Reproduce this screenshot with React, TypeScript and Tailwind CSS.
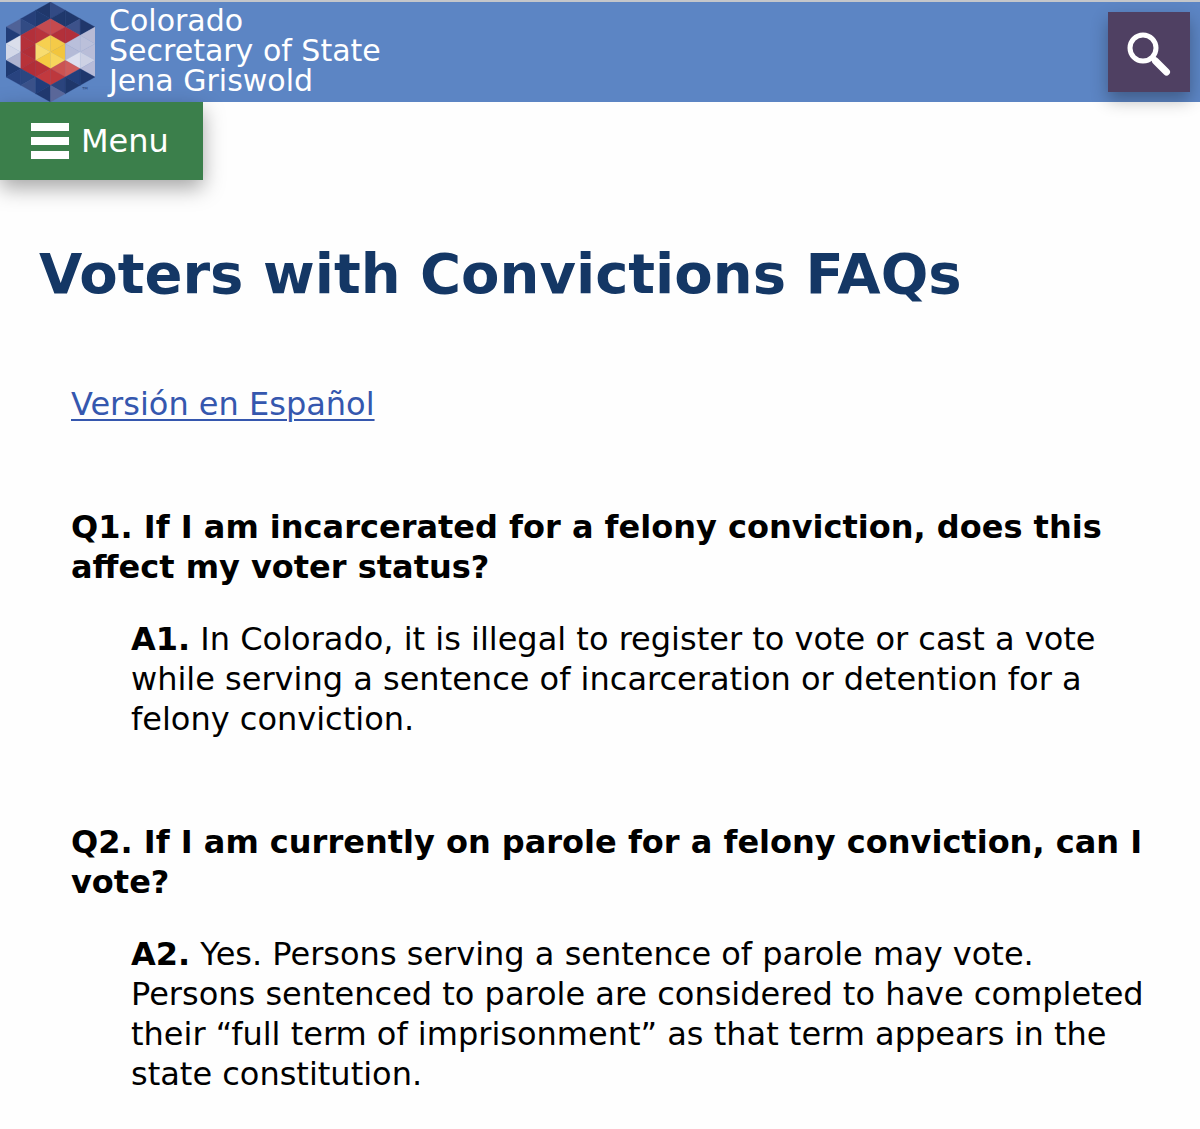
import type { ReactNode } from "react";

// Fill of every facet in the logo, one list per vertical strip, top to bottom
const FACETS = [
  ["#4f6297", "#213d78", "#dadeeb", "#d3d8e8", "#adb3d0", "#1f3a72", "#28437f"],
  ["#263f79", "#324b84", "#b3303a", "#b5313a", "#b22e37", "#b83239", "#b22e37", "#2a4680", "#3a5189"],
  ["#1f376b", "#203a70", "#c54b50", "#b8343c", "#f6d050", "#f8dc70", "#f5cb42", "#b73138", "#c2393e", "#213d7a", "#20386e"],
  ["#324a84", "#20386c", "#c64a4e", "#b3303a", "#f4ca48", "#f2c53d", "#f7d55c", "#cb5352", "#bd383d", "#2b447d", "#5a6799"],
  ["#20386c", "#3d528a", "#b2303c", "#b9bfdb", "#b4bad7", "#dcdfee", "#cf5c5b", "#223f7c", "#1f376b"],
  ["#20376b", "#b8bbd5", "#bbc0da", "#b9bdd8", "#cdd1e4", "#b7bbd8", "#1f376d"],
];

const COL = 15;
const UNIT = 17;

function facetPoints(strip: number, index: number) {
  const left = strip < 3;
  const outer = left ? strip - 3 : strip - 2;
  const inner = left ? outer + 1 : outer - 1;
  const outerTop = -3 + Math.abs(outer) / 2;
  const innerTop = -3 + Math.abs(inner) / 2;
  const step = Math.floor(index / 2);
  const points =
    index % 2 === 0
      ? [[outer, outerTop + step], [inner, innerTop + step], [inner, innerTop + step + 1]]
      : [[outer, outerTop + step], [outer, outerTop + step + 1], [inner, innerTop + step + 1]];
  return points.map(([x, y]) => `${(x + 3) * COL},${(y + 3) * UNIT}`).join(" ");
}

function Logo() {
  return (
    <svg
      viewBox="0 0 90 102"
      preserveAspectRatio="none"
      className="h-[100px] w-[89px] shrink-0"
      aria-hidden="true"
    >
      {FACETS.map((fills, strip) =>
        fills.map((fill, i) => (
          <polygon
            key={`${strip}-${i}`}
            points={facetPoints(strip, i)}
            fill={fill}
            stroke={fill}
            strokeWidth="0.3"
          />
        )),
      )}
      <text x="76" y="93" fontSize="8" fill="#1f376b">
        ™
      </text>
    </svg>
  );
}

function SearchIcon() {
  return (
    <svg viewBox="0 0 44 48" className="h-12 w-11" fill="none" stroke="white" aria-hidden="true">
      <circle cx="16" cy="20" r="13" strokeWidth="5" />
      <path d="M25 29 28 32" strokeWidth="5" />
      <path d="M28.5 33 39.5 44" strokeWidth="7" strokeLinecap="round" />
    </svg>
  );
}

type FaqProps = { question: string; label: string; children: ReactNode };

function Faq({ question, label, children }: FaqProps) {
  return (
    <section className="mb-[83px]">
      <h2 className="mb-8 font-bold">{question}</h2>
      <p className="pl-[60px]">
        <strong>{label}</strong> {children}
      </p>
    </section>
  );
}

export default function App() {
  return (
    <div className="overflow-hidden bg-[#fefefe] font-['Verdana','DejaVu_Sans',sans-serif] text-black">
      <header className="flex items-start justify-between border-t-2 border-[#c4c6ca] bg-[#5c85c4] pr-2.5 pl-1.5">
        <a href="#" className="flex items-start gap-3.5 text-white">
          <Logo />
          <span className="pt-1 text-[30px] leading-[30px]">
            Colorado
            <br />
            Secretary of State
            <br />
            Jena Griswold
          </span>
        </a>
        <button
          type="button"
          aria-label="Search"
          className="mt-2.5 flex h-20 w-[82px] items-center justify-center bg-[#4f4062] shadow-[0_8px_16px_rgba(0,0,0,0.3)]"
        >
          <SearchIcon />
        </button>
      </header>

      <button
        type="button"
        className="flex h-[78px] w-[203px] items-center gap-3 bg-[#3b7f4b] pl-[31px] text-[32px] text-white shadow-[0_8px_20px_rgba(0,0,0,0.35)]"
      >
        <span className="flex flex-col gap-1.5" aria-hidden="true">
          <span className="h-2 w-[38px] bg-white" />
          <span className="h-2 w-[38px] bg-white" />
          <span className="h-2 w-[38px] bg-white" />
        </span>
        Menu
      </button>

      <main className="px-[39px] pt-[58px]">
        <h1 className="text-[56px] leading-[72px] font-bold text-[#143765]">
          Voters with Convictions FAQs
        </h1>
        <div className="pt-[74px] pl-8 text-[32px] leading-10">
          <p className="mb-[83px]">
            <a href="#" className="text-[#3557ae] underline decoration-2 underline-offset-4">
              Versión en Español
            </a>
          </p>
          <Faq
            question="Q1. If I am incarcerated for a felony conviction, does this affect my voter status?"
            label="A1."
          >
            In Colorado, it is illegal to register to vote or cast a vote while serving a sentence of
            incarceration or detention for a felony conviction.
          </Faq>
          <Faq
            question="Q2. If I am currently on parole for a felony conviction, can I vote?"
            label="A2."
          >
            Yes. Persons serving a sentence of parole may vote. Persons sentenced to parole are
            considered to have completed their “full term of imprisonment” as that term appears in
            the state constitution.
          </Faq>
        </div>
      </main>
    </div>
  );
}
